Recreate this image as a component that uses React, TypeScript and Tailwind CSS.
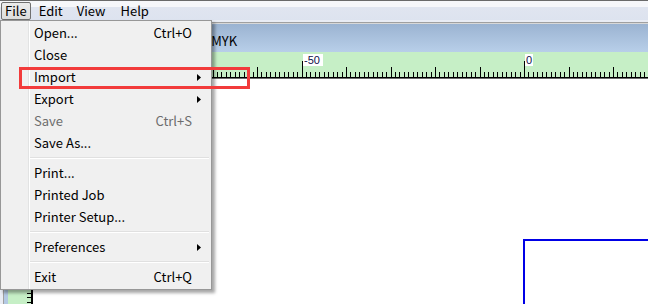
import React from "react";

const PX = 4.45;

function HRuler() {
  const ticks: React.ReactNode[] = [];
  for (let u = -116; u <= 28; u++) {
    const x = Math.round(524 + u * PX) - 8;
    const h = u % 50 === 0 ? 16 : u % 10 === 0 ? 10 : 5;
    ticks.push(<rect key={u} x={x} y={25 - h} width={1} height={h} fill="#000" />);
  }
  return (
    <svg width={640} height={27} className="block" shapeRendering="crispEdges">
      <rect x={0} y={0} width={640} height={25} fill="#c6efc6" />
      {ticks}
      <rect x={0} y={25} width={640} height={1} fill="#000" />
      <rect x={0} y={26} width={640} height={1} fill="#6b6b6b" />
      <rect x={295} y={2} width={20} height={12} fill="#fff" />
      <text x={296} y={12} fontSize={11} fontFamily="'Liberation Sans', Arial, sans-serif" fill="#10104a" shapeRendering="auto">
        -50
      </text>
      <rect x={517} y={2} width={8} height={12} fill="#fff" />
      <text x={518} y={12} fontSize={11} fontFamily="'Liberation Sans', Arial, sans-serif" fill="#10104a" shapeRendering="auto">
        0
      </text>
    </svg>
  );
}

function VRuler() {
  const ticks: React.ReactNode[] = [];
  for (let k = -48; k <= 2; k++) {
    const y = Math.round(213.7 + k * PX);
    const w = k % 10 === -7 ? 8 : 4;
    ticks.push(<rect key={k} x={23 - w} y={y} width={w} height={1} fill="#000" />);
  }
  return (
    <svg width={25} height={225} className="block" shapeRendering="crispEdges">
      <rect x={0} y={0} width={23} height={225} fill="#c6efc6" />
      {ticks}
      <rect x={23} y={0} width={2} height={225} fill="#000" />
    </svg>
  );
}

function Arrow() {
  return (
    <svg width={4} height={7} className="block">
      <polygon points="0,0 4,3.5 0,7" fill="#000" />
    </svg>
  );
}

type Item = { label: string; shortcut?: string; sub?: boolean; disabled?: boolean } | "sep";

const items: Item[] = [
  { label: "Open...", shortcut: "Ctrl+O" },
  { label: "Close" },
  { label: "Import", sub: true },
  { label: "Export", sub: true },
  { label: "Save", shortcut: "Ctrl+S", disabled: true },
  { label: "Save As..." },
  "sep",
  { label: "Print..." },
  { label: "Printed Job" },
  { label: "Printer Setup..." },
  "sep",
  { label: "Preferences", sub: true },
  "sep",
  { label: "Exit", shortcut: "Ctrl+Q" },
];

function Menu() {
  return (
    <div className="absolute left-0 top-[20px] w-[212px] border border-[#979797] bg-[linear-gradient(to_right,#f0f0f0_27px,#e2e3e3_27px,#e2e3e3_28px,#ffffff_28px,#ffffff_29px,#f0f0f0_29px)] py-[1px] shadow-[3px_3px_3px_rgba(0,0,0,0.35)]">
      {items.map((it, i) =>
        it === "sep" ? (
          <div key={i} className="flex h-[8px] flex-col justify-center pl-[29px] pr-[2px]">
            <div className="h-[1px] bg-[#e0e0e0]" />
            <div className="h-[1px] bg-white" />
          </div>
        ) : (
          <div
            key={i}
            className={`flex h-[22px] items-center pl-[33px] leading-[16px] ${it.disabled ? "text-[#6d6d6d]" : "text-black"}`}
          >
            <span className="flex-1">{it.label}</span>
            {it.shortcut && <span>{it.shortcut}</span>}
            <span className="flex w-[19px] items-center pl-[5px]">{it.sub && <Arrow />}</span>
          </div>
        )
      )}
    </div>
  );
}

export default function App() {
  return (
    <div
      className="relative h-[304px] w-[648px] overflow-hidden bg-[#e9ecf4] text-[13px] text-black"
      style={{ fontFamily: "'Noto Sans CJK SC', 'Noto Sans', sans-serif" }}
    >
      {/* menu bar */}
      <div className="flex h-[20px] items-center border-t border-[#6a6a6a] bg-[linear-gradient(to_bottom,#f6f7fa_0%,#f6f7fa_30%,#e0e5f0_34%,#dde3ef_100%)] leading-[16px]">
        <div className="ml-[1px] flex h-[18px] items-center rounded-[2px] border border-[#707070] bg-[linear-gradient(to_bottom,#ececec,#dcdcdc)] px-[3px]">
          File
        </div>
        <span className="ml-[8px]">Edit</span>
        <span className="ml-[14px]">View</span>
        <span className="ml-[15px]">Help</span>
      </div>

      {/* window */}
      <div className="h-[2px]" />
      <div className="ml-[3px] flex h-[282px] flex-col border-l border-t border-[#a0a0a0] bg-[#b3c9e3]">
        <div className="h-[1px] bg-[#d8d8d8]" />
        {/* header */}
        <div className="flex h-[28px] bg-[linear-gradient(to_bottom,#9bb3d1,#b8cfe9)] pt-[9px] leading-[16px]">
          <div className="w-[199px]" />
          <span>CMYK</span>
        </div>
        {/* ruler row */}
        <div className="ml-[4px] flex h-[27px]">
          <HRuler />
        </div>
        {/* body */}
        <div className="ml-[4px] flex flex-1">
          <VRuler />
          <div className="relative flex-1 bg-white">
            <div className="absolute left-[490px] top-[160px] h-[200px] w-[200px] border-l-2 border-t-2 border-[#0000e6]" />
          </div>
        </div>
      </div>

      <Menu />

      {/* annotation box */}
      <div className="absolute left-[19px] top-[67px] h-[22px] w-[231px] border-[3px] border-[#f23b3b]" />
    </div>
  );
}
